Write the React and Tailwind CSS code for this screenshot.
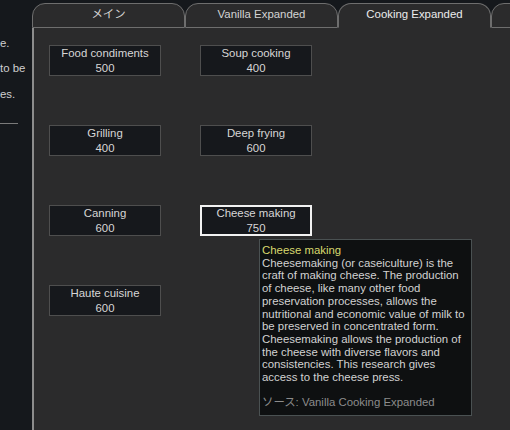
const projects = [
  [
    { name: "Food condiments", cost: 500 },
    { name: "Soup cooking", cost: 400 },
  ],
  [
    { name: "Grilling", cost: 400 },
    { name: "Deep frying", cost: 600 },
  ],
  [
    { name: "Canning", cost: 600 },
    { name: "Cheese making", cost: 750, selected: true },
  ],
  [{ name: "Haute cuisine", cost: 600 }],
];

const tabs = [
  { label: "メイン" },
  { label: "Vanilla Expanded" },
  { label: "Cooking Expanded", active: true },
];

const ProjectBox = ({ item }) => (
  <div
    className={`flex h-[31px] w-[112px] flex-col items-center justify-center bg-[#16181c] text-[11.4px] leading-[14.5px] text-[#d6d6d6] ${
      item.selected ? "border-2 border-[#f2f2f2]" : "border border-[#4e4e4e]"
    }`}
  >
    <span>{item.name}</span>
    <span>{item.cost}</span>
  </div>
);

const App = () => {
  return (
    <div
      className="flex h-[430px] w-[510px] overflow-hidden bg-[#15181c]"
      style={{ fontFamily: '"Liberation Sans", Arial, "Noto Sans CJK JP", sans-serif' }}
    >
      {/* sidebar, mostly cut off */}
      <aside className="relative w-[32px] shrink-0 overflow-hidden text-[11.4px] text-[#cfcfcf]">
        <div className="absolute left-0 top-[35px] whitespace-nowrap">e.</div>
        <div className="absolute left-0 top-[60px] whitespace-nowrap">to be</div>
        <div className="absolute left-0 top-[86px] whitespace-nowrap">es.</div>
        <div className="absolute left-0 top-[123px] h-px w-[18px] bg-[#7a7a7a]" />
      </aside>

      <main className="flex min-w-0 flex-1 flex-col">
        {/* tab strip */}
        <div className="flex h-[28px] shrink-0 items-end">
          {tabs.map((tab) => (
            <div
              key={tab.label}
              className={`flex h-[25px] w-[153px] shrink-0 items-center justify-center rounded-t-[13px] border border-[#6e6e6e] bg-[#2b2b2c] pb-[2px] text-[11.4px] ${
                tab.active ? "border-b-transparent text-[#ececec]" : "border-b-[#6e6e6e] text-[#d4d4d4]"
              }`}
            >
              {tab.label}
            </div>
          ))}
          <div className="h-[25px] w-[60px] shrink-0 rounded-t-[13px] border border-[#6e6e6e] bg-[#2b2b2c]" />
        </div>

        {/* content panel */}
        <div className="relative flex-1 border-l-2 border-[#8c8c8c] bg-[#2b2b2c]">
          <div className="flex flex-col gap-[49px] pl-[15px] pt-[17px]">
            {projects.map((row, i) => (
              <div key={i} className="flex gap-[39px]">
                {row.map((item) => (
                  <ProjectBox key={item.name} item={item} />
                ))}
              </div>
            ))}
          </div>

          {/* tooltip */}
          <div className="absolute left-[225px] top-[211px] w-[213px] border border-[#4a5152] bg-[#0e1011] px-[2px] pb-[6px] pt-[4px] text-[11.4px] leading-[12.7px] text-[#d2d2d2]">
            <div className="text-[#d8d86e]">Cheese making</div>
            <p>
              Cheesemaking (or caseiculture) is the craft of making cheese. The production of cheese, like many other
              food preservation processes, allows the nutritional and economic value of milk to be preserved in
              concentrated form. Cheesemaking allows the production of the cheese with diverse flavors and
              consistencies. This research gives access to the cheese press.
            </p>
            <p className="mt-[12.7px] text-[#8c8c8c]">ソース: Vanilla Cooking Expanded</p>
          </div>
        </div>
      </main>
    </div>
  );
};

export default App;
